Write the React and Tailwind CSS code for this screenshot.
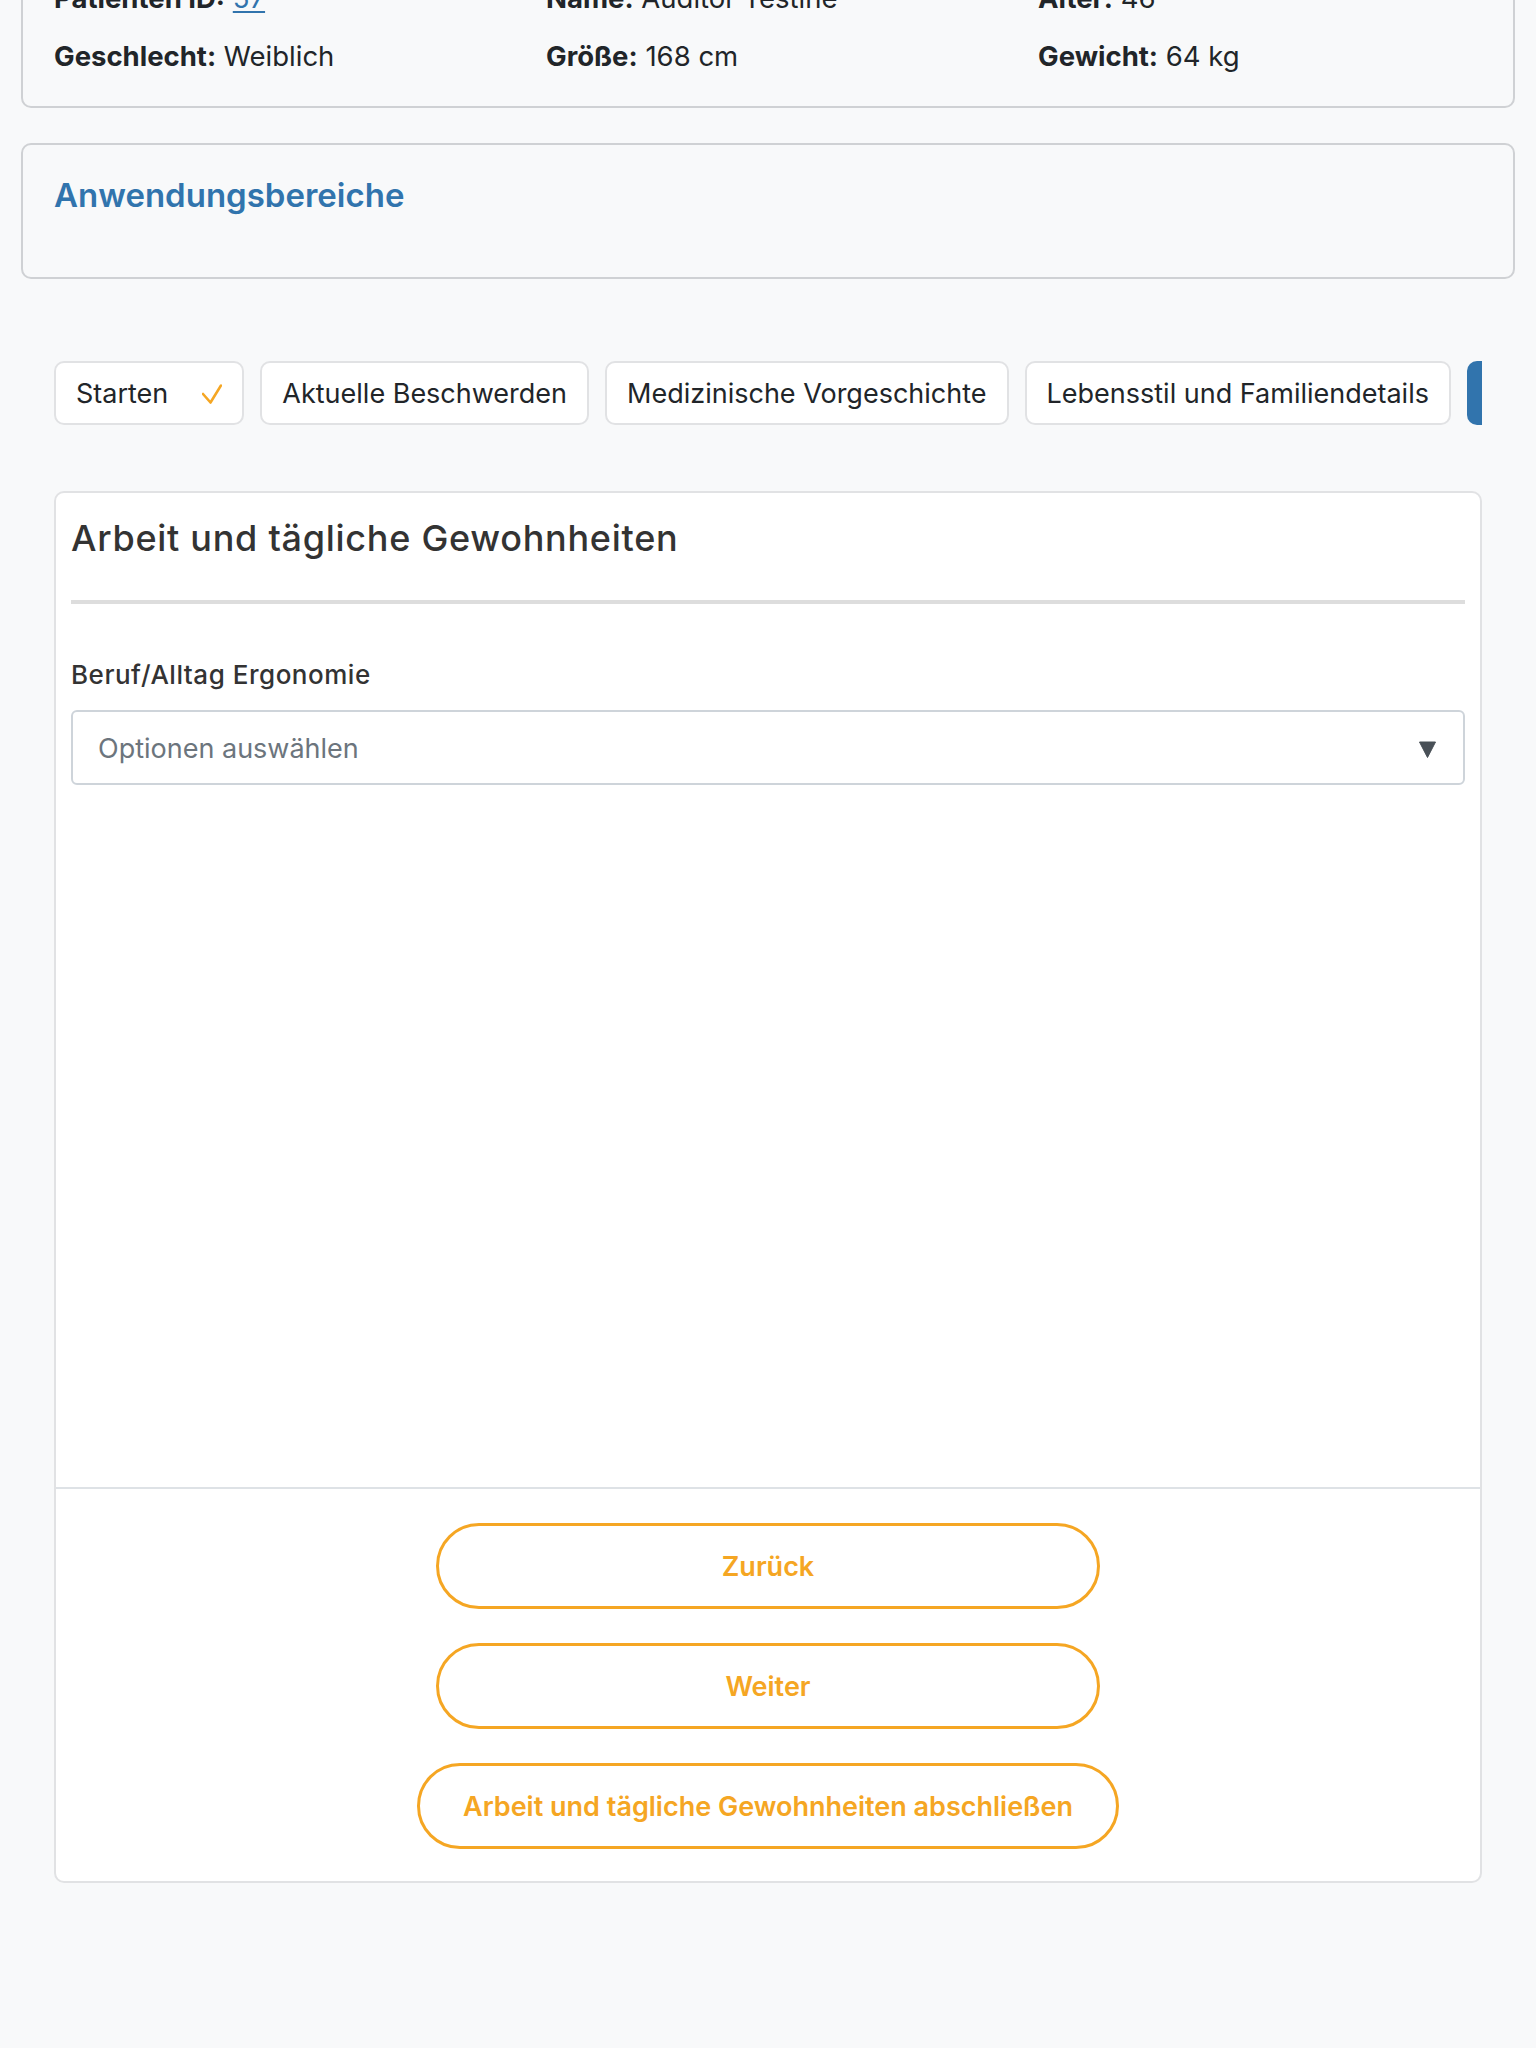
import React from 'react';

const patientInfo = [
  { label: 'Patienten ID:', value: '57', link: true },
  { label: 'Name:', value: 'Auditor Testine' },
  { label: 'Alter:', value: '46' },
  { label: 'Geschlecht:', value: 'Weiblich' },
  { label: 'Größe:', value: '168 cm' },
  { label: 'Gewicht:', value: '64 kg' },
];

const steps = [
  { title: 'Starten', done: true },
  { title: 'Aktuelle Beschwerden' },
  { title: 'Medizinische Vorgeschichte' },
  { title: 'Lebensstil und Familiendetails' },
  { title: 'Arbeit und tägliche Gewohnheiten', active: true },
];

const CheckMark = () => (
  <svg width="20" height="20" viewBox="0 0 20 20" className="shrink-0">
    <polyline
      points="1,10 8.5,18.5 19,1.5"
      fill="none"
      stroke="#f5a623"
      strokeWidth="2.6"
      strokeLinecap="round"
      strokeLinejoin="round"
    />
  </svg>
);

const PatientCard = () => (
  <div className="border-2 border-[#cfd1d4] rounded-[10px] px-[31px] pt-[30px] pb-[30px]">
    <div className="grid grid-cols-[492px_492px_1fr] gap-y-[19px] text-[27.5px] leading-[39px]">
      {patientInfo.map((item, index) => (
        <div key={index} className="whitespace-nowrap">
          <span className="font-bold">{item.label}</span>{' '}
          {item.link ? (
            <a href="#" className="text-[#3174ad] underline underline-offset-[3px]">{item.value}</a>
          ) : (
            <span>{item.value}</span>
          )}
        </div>
      ))}
    </div>
  </div>
);

const AreasCard = () => (
  <div className="mt-[35px] border-2 border-[#cfd1d4] rounded-[10px] px-[31px] pt-[32px] pb-[64px]">
    <h2 className="text-[33px] leading-[36px] font-semibold text-[#3174ad]">Anwendungsbereiche</h2>
  </div>
);

const StepTabs = () => (
  <div className="mt-[82px] flex gap-[16px] overflow-hidden">
    {steps.map((step, index) => (
      <div
        key={index}
        className={
          step.active
            ? 'shrink-0 h-[64px] flex items-center pt-[2px] px-[20px] rounded-[10px] bg-[#3174ad] text-white text-[27px] whitespace-nowrap'
            : 'shrink-0 h-[64px] flex items-center gap-[34px] pt-[2px] px-[20px] rounded-[10px] border-2 border-[#e1e2e4] bg-white text-[27px] whitespace-nowrap'
        }
      >
        <span>{step.title}</span>
        {step.done && <CheckMark />}
      </div>
    ))}
  </div>
);

const SectionCard = () => (
  <div className="mt-[66px] border-2 border-[#e1e2e4] rounded-[10px] bg-white">
    <div className="mx-[15px] pt-[25px] pb-[41px] border-b-4 border-[#dddddd]">
      <h3 className="text-[36px] leading-[41px] font-medium tracking-[0.02em] text-[#333333]">
        Arbeit und tägliche Gewohnheiten
      </h3>
    </div>

    <div className="px-[15px] pt-[55px] h-[883px]">
      <label className="block text-[26px] leading-[32px] font-medium tracking-[0.02em] text-[#333333] mb-[19px]">
        Beruf/Alltag Ergonomie
      </label>
      <div className="h-[75px] border-2 border-[#ced4da] rounded-[6px] flex items-center justify-between pt-[3px] pl-[25px] pr-[27px]">
        <span className="text-[27px] text-[#6c757d]">Optionen auswählen</span>
        <svg width="17" height="17" viewBox="0 0 17 17">
          <polygon points="0.5,1 16.5,1 8.5,16.5" fill="#495057" strokeLinejoin="round" stroke="#495057" strokeWidth="1" />
        </svg>
      </div>
    </div>

    <div className="border-t-2 border-[#dee2e6] pt-[34px] pb-[32px] flex flex-col items-center gap-[34px]">
      {['Zurück', 'Weiter', 'Arbeit und tägliche Gewohnheiten abschließen'].map((label) => (
        <button
          key={label}
          className="min-w-[664px] h-[86px] px-[43px] pt-[2px] rounded-full border-[3px] border-[#f5a623] bg-white text-[#f5a623] text-[27px] font-semibold"
        >
          {label}
        </button>
      ))}
    </div>
  </div>
);

export default function App() {
  return (
    <div className="min-h-screen overflow-hidden bg-[#f8f9fa] text-[#212529] font-['Inter','Noto_Sans',sans-serif]">
      <div className="px-[21px] -mt-[53px]">
        <PatientCard />
        <AreasCard />
        <div className="px-[33px]">
          <StepTabs />
          <SectionCard />
        </div>
      </div>
    </div>
  );
}
